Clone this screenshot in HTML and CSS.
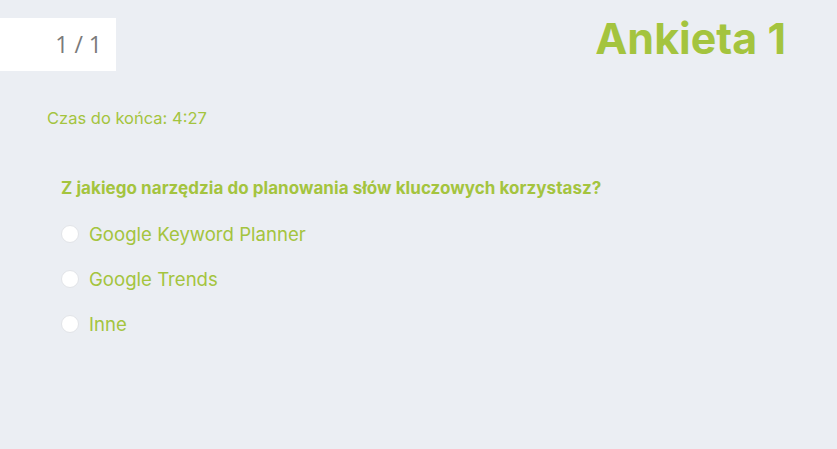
FILE: index.html
```html
<!DOCTYPE html>
<html lang="pl">
<head>
<meta charset="utf-8">
<link rel="stylesheet" href="styles.css">
</head>
<body>
<div class="page">
  <header class="top">
    <div class="counter">1 / 1</div>
    <h1 class="title">Ankieta 1</h1>
  </header>
  <div class="timer">Czas do końca: 4:27</div>
  <section class="question">
    <h2 class="q-text">Z jakiego narzędzia do planowania słów kluczowych korzystasz?</h2>
    <ul class="options">
      <li class="option"><span class="radio"></span><span class="label">Google Keyword Planner</span></li>
      <li class="option"><span class="radio"></span><span class="label">Google Trends</span></li>
      <li class="option"><span class="radio"></span><span class="label">Inne</span></li>
    </ul>
  </section>
</div>
</body>
</html>
```
FILE: styles.css
```css
html, body {
  margin: 0;
  padding: 0;
  background: #ebeef3;
  font-family: Inter, Roboto, "Liberation Sans", sans-serif;
  color: #a4c43e;
}
.page {
  width: 837px;
  height: 449px;
}
.top {
  display: flex;
  justify-content: space-between;
  align-items: flex-start;
  padding-top: 18px;
}
.counter {
  width: 116px;
  height: 53px;
  box-sizing: border-box;
  background: #ffffff;
  color: #7a7a7a;
  font-family: "Open Sans", sans-serif;
  font-weight: 400;
  font-size: 23px;
  line-height: 53px;
  text-align: right;
  padding-right: 14px;
}
.title {
  margin: 0 51px 0 0;
  font-family: Inter, sans-serif;
  font-weight: 700;
  font-size: 43px;
  line-height: 1;
  position: relative;
  top: -1px;
}
.timer {
  margin: 37px 0 0 47px;
  font-size: 16.5px;
  line-height: 20px;
}
.question {
  margin: 50px 0 0 61px;
}
.q-text {
  margin: 0;
  font-size: 17px;
  font-weight: 700;
  line-height: 20px;
  letter-spacing: 0.05px;
}
.options {
  list-style: none;
  margin: 13px 0 0 0;
  padding: 0;
}
.option {
  display: flex;
  align-items: center;
  height: 45px;
  gap: 10px;
}
.radio {
  width: 16px;
  height: 16px;
  border-radius: 50%;
  background: #ffffff;
  border: 1px solid #e2e4e8;
}
.label {
  font-size: 18.6px;
}
```
